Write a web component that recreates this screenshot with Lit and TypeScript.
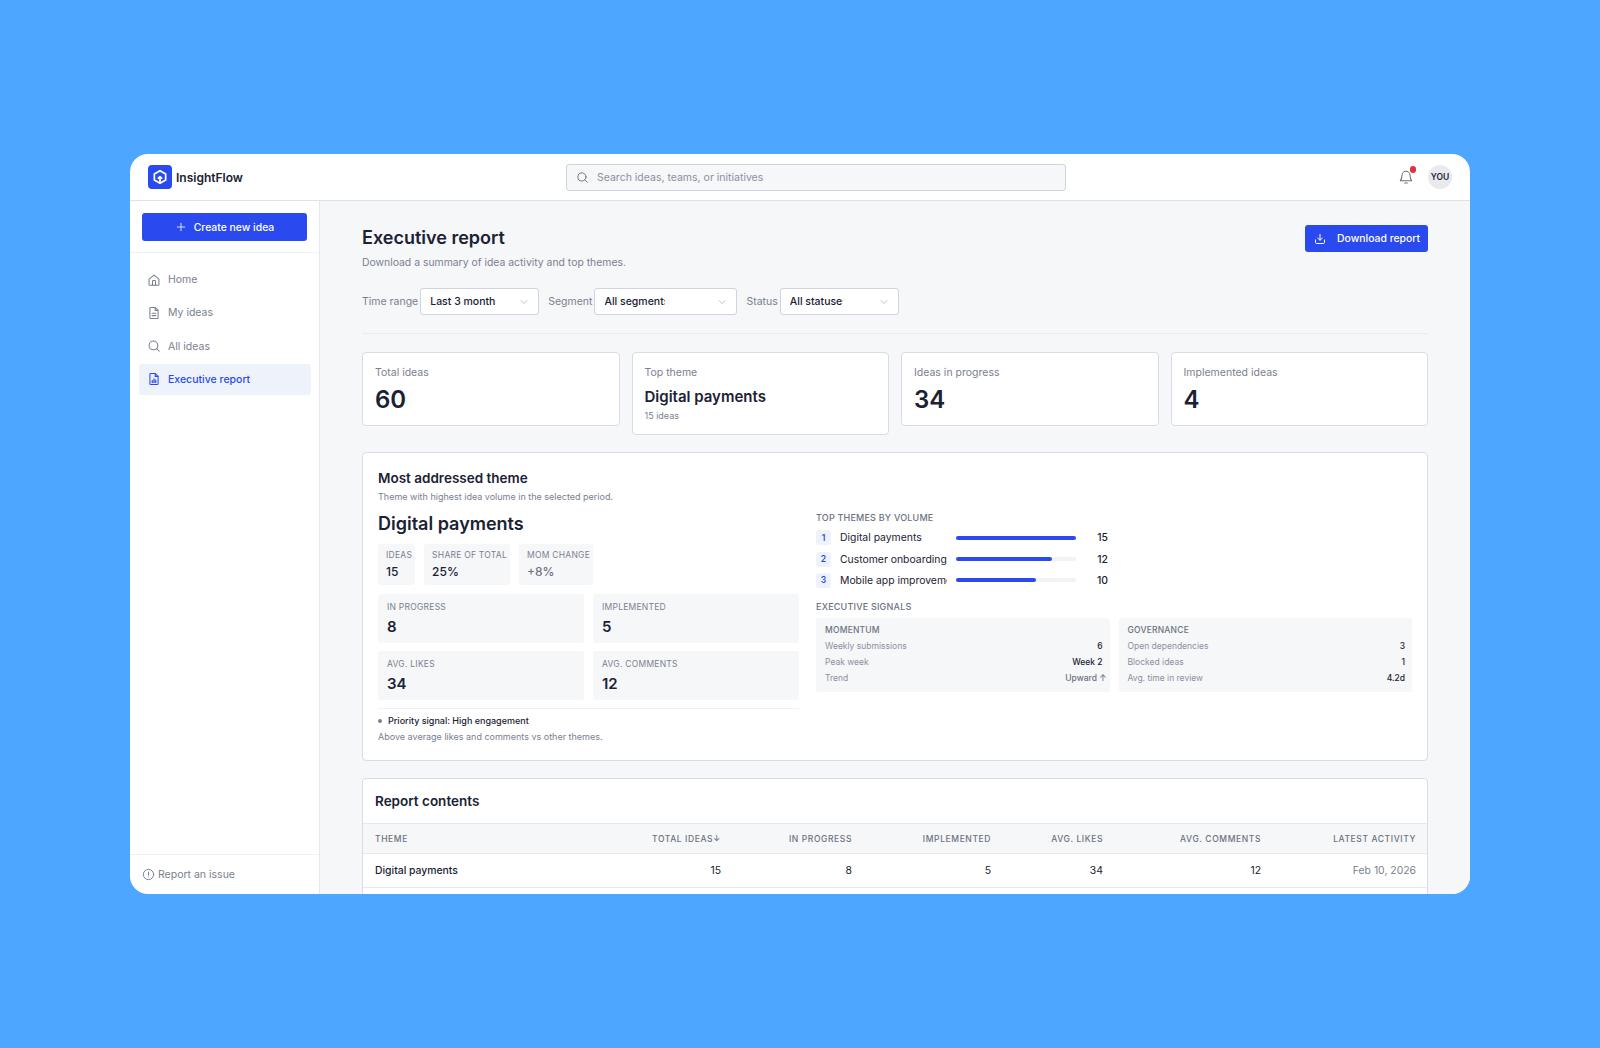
import { LitElement, html, css, svg } from "lit";
import { customElement } from "lit/decorators.js";

const icon = (body: unknown, size = 14, sw = 1.8) => html`<svg
  width=${size}
  height=${size}
  viewBox="0 0 24 24"
  fill="none"
  stroke="currentColor"
  stroke-width=${sw}
  stroke-linecap="round"
  stroke-linejoin="round"
>${body}</svg>`;

const searchPath = svg`<circle cx="11" cy="11" r="7.5"/><path d="M21 21l-4.6-4.6"/>`;
const homePath = svg`<path d="M3.5 10.5 12 3.5l8.5 7V20a1 1 0 0 1-1 1h-15a1 1 0 0 1-1-1z"/><path d="M9.5 21v-7a1 1 0 0 1 1-1h3a1 1 0 0 1 1 1v7"/>`;
const docPath = svg`<path d="M14 2.5H6.5A1.5 1.5 0 0 0 5 4v16a1.5 1.5 0 0 0 1.5 1.5h11A1.5 1.5 0 0 0 19 20V7.5z"/><path d="M14 2.5v5h5"/><path d="M9 12.5h6M9 16.5h6"/>`;
const reportPath = svg`<path d="M14 2.5H6.5A1.5 1.5 0 0 0 5 4v16a1.5 1.5 0 0 0 1.5 1.5h11A1.5 1.5 0 0 0 19 20V7.5z"/><path d="M14 2.5v5h5"/><path d="M9 18v-3M12 18v-6M15 18v-4" stroke-width="2.2"/>`;
const bellPath = svg`<path d="M6 9.5a6 6 0 0 1 12 0c0 5 1.5 7 2.5 8h-17c1-1 2.5-3 2.5-8z"/><path d="M10 21h4"/>`;
const chevron = svg`<path d="M6 9l6 6 6-6"/>`;
const plusPath = svg`<path d="M12 4.5v15M4.5 12h15"/>`;
const downloadPath = svg`<path d="M12 3v11M7.5 10l4.5 4.5 4.5-4.5"/><path d="M3 14v4.5A2.5 2.5 0 0 0 5.5 21h13a2.5 2.5 0 0 0 2.5-2.5V14"/>`;
const alertPath = svg`<circle cx="12" cy="12" r="9.5"/><path d="M12 7.5V13M12 16.5v.2"/>`;

const navItems = [
  { label: "Home", path: homePath },
  { label: "My ideas", path: docPath },
  { label: "All ideas", path: searchPath },
  { label: "Executive report", path: reportPath, active: true },
];

const themes = [
  { rank: 1, name: "Digital payments", pct: 100, count: 15 },
  { rank: 2, name: "Customer onboarding", pct: 80, count: 12 },
  { rank: 3, name: "Mobile app improvements", pct: 67, count: 10 },
];

const tableRows = [
  ["Digital payments", "15", "8", "5", "34", "12", "Feb 10, 2026"],
  ["Customer onboarding", "12", "6", "3", "28", "9", "Feb 8, 2026"],
];

@customElement("app-root")
export class AppRoot extends LitElement {
  static styles = css`
    :host {
      display: flex;
      align-items: center;
      justify-content: center;
      height: 100vh;
      background: #4da6ff;
      font-family: Inter, "Noto Sans", sans-serif;
      color: #1a2233;
    }
    .window {
      width: 1340px;
      height: 740px;
      background: #fff;
      border-radius: 18px;
      overflow: hidden;
      display: flex;
      flex-direction: column;
    }
    .topbar {
      flex: none;
      height: 47px;
      box-sizing: border-box;
      border-bottom: 1.5px solid #dfe2ea;
      display: grid;
      grid-template-columns: 418px 500px 1fr;
      align-items: center;
      padding: 0 18px;
    }
    .brand {
      display: flex;
      align-items: center;
      gap: 4px;
      font-size: 12px;
      font-weight: 600;
    }
    .logo {
      width: 24px;
      height: 24px;
      border-radius: 4px;
      background: #2a4af0;
      display: flex;
      align-items: center;
      justify-content: center;
    }
    .search {
      height: 27px;
      box-sizing: border-box;
      border: 1px solid #cfd3de;
      border-radius: 3px;
      background: #f6f7f9;
      display: flex;
      align-items: center;
      gap: 8px;
      padding: 0 9px;
      font-size: 10.5px;
      color: #8a90a0;
    }
    .search svg {
      color: #5f6675;
    }
    .top-actions {
      display: flex;
      justify-content: flex-end;
      align-items: center;
      gap: 14px;
    }
    .bell {
      position: relative;
      display: flex;
      color: #6b7280;
    }
    .bell i {
      position: absolute;
      top: -3px;
      right: -2px;
      width: 6.5px;
      height: 6.5px;
      border-radius: 50%;
      background: #e5303a;
    }
    .avatar {
      width: 24px;
      height: 24px;
      border-radius: 50%;
      background: #e9eaee;
      font-size: 8.5px;
      font-weight: 600;
      display: flex;
      align-items: center;
      justify-content: center;
    }
    .body {
      flex: 1;
      min-height: 0;
      display: flex;
    }
    .sidebar {
      flex: none;
      width: 190px;
      box-sizing: border-box;
      border-right: 1px solid #e6e8ee;
      display: flex;
      flex-direction: column;
    }
    .create-wrap {
      padding: 12px 12px 11px;
      border-bottom: 1.5px solid #eff1f5;
    }
    .primary {
      display: flex;
      align-items: center;
      background: #2a4af0;
      color: #fff;
      border-radius: 3px;
      font-size: 10.4px;
      font-weight: 500;
    }
    .create {
      height: 28px;
      justify-content: center;
      gap: 7px;
    }
    nav {
      flex: 1;
      padding: 0 8px 0 9px;
      display: flex;
      flex-direction: column;
      gap: 2.3px;
      margin-top: 11px;
    }
    .nav-item {
      height: 31px;
      display: flex;
      align-items: center;
      gap: 7px;
      padding: 0 8px;
      border-radius: 3px;
      font-size: 10.5px;
      color: #7a8090;
    }
    .nav-item.active {
      background: #eef3fb;
      color: #2a4af0;
      font-weight: 500;
    }
    .report-issue {
      height: 40px;
      flex: none;
      box-sizing: border-box;
      padding: 0 12px 1px;
      border-top: 1.5px solid #eff1f5;
      display: flex;
      align-items: center;
      gap: 3px;
      font-size: 10.5px;
      color: #7a8090;
    }
    main {
      flex: 1;
      min-width: 0;
      background: #f6f7f9;
      padding: 24px 42px 0;
      overflow: hidden;
    }
    .head {
      display: flex;
      justify-content: space-between;
      align-items: flex-start;
    }
    h1 {
      margin: 0;
      font-size: 18px;
      line-height: 26px;
      font-weight: 600;
    }
    .lead {
      margin: 5px 0 0;
      font-size: 10.4px;
      line-height: 14px;
      color: #7a8090;
    }
    .download {
      height: 27px;
      padding: 0 8px 0 9px;
      gap: 11px;
    }
    .filters {
      display: flex;
      align-items: center;
      margin-top: 18px;
      padding-bottom: 18px;
      border-bottom: 1px solid #e9ebf0;
      font-size: 10.5px;
      color: #7a8090;
    }
    .filter {
      display: flex;
      align-items: center;
      gap: 2px;
      margin-right: 9px;
    }
    .select {
      height: 27px;
      box-sizing: border-box;
      background: #fff;
      border: 1px solid #cfd3de;
      border-radius: 3px;
      display: flex;
      align-items: center;
      justify-content: space-between;
      padding: 0 8px 0 9px;
      color: #1a2233;
      font-weight: 500;
    }
    .select span {
      overflow: hidden;
      white-space: nowrap;
    }
    .select svg {
      color: #9aa0ae;
      flex: none;
    }
    .w-range {
      width: 119px;
    }
    .w-range span {
      width: 66px;
    }
    .w-seg {
      width: 143px;
    }
    .w-seg span {
      width: 61px;
    }
    .w-status {
      width: 119px;
    }
    .w-status span {
      width: 53px;
    }
    .kpis {
      display: grid;
      grid-template-columns: repeat(4, 1fr);
      gap: 12px;
      align-items: start;
      margin-top: 18px;
    }
    .card {
      background: #fff;
      border: 1px solid #d9dce6;
      border-radius: 4px;
      box-sizing: border-box;
    }
    .kpi {
      padding: 12.5px 12px 0;
      height: 74px;
    }
    .kpi.tall {
      height: 83px;
    }
    .kpi-label {
      font-size: 10.5px;
      line-height: 14px;
      color: #7a8090;
    }
    .kpi-value {
      font-size: 24px;
      line-height: 30px;
      font-weight: 600;
      margin-top: 5px;
    }
    .kpi-theme {
      font-size: 15px;
      line-height: 20px;
      font-weight: 600;
      margin-top: 7.5px;
    }
    .kpi-sub {
      font-size: 9px;
      line-height: 12px;
      color: #7a8090;
      margin-top: 3px;
    }
    .theme-card {
      margin-top: 17px;
      height: 309px;
      padding: 15px;
    }
    h2 {
      margin: 0;
      font-size: 13.5px;
      line-height: 20px;
      font-weight: 600;
    }
    .theme-sub {
      font-size: 9px;
      line-height: 12px;
      color: #7a8090;
      margin-top: 3px;
    }
    .theme-grid {
      display: grid;
      grid-template-columns: 421px 1fr;
      gap: 17px;
    }
    .theme-name {
      font-size: 18px;
      line-height: 26px;
      font-weight: 600;
      margin-top: 8px;
    }
    .minis {
      display: flex;
      gap: 9px;
      margin-top: 7px;
    }
    .mini,
    .stat,
    .panel {
      background: #f6f7f9;
      border-radius: 3px;
    }
    .mini {
      padding: 5px 3px 0 8px;
      height: 41px;
      box-sizing: border-box;
    }
    .caps {
      font-size: 8.5px;
      line-height: 12px;
      letter-spacing: 0.25px;
      color: #7a8090;
    }
    .mini b {
      display: block;
      font-size: 12px;
      line-height: 16px;
      font-weight: 500;
      margin-top: 3px;
    }
    .mini b.muted {
      color: #6b7280;
    }
    .stats {
      display: grid;
      grid-template-columns: 1fr 1fr;
      gap: 8px 9px;
      margin-top: 9px;
    }
    .stat {
      height: 49px;
      box-sizing: border-box;
      padding: 6.5px 9px 0;
    }
    .stat b {
      display: block;
      font-size: 15px;
      line-height: 20px;
      font-weight: 600;
      margin-top: 4px;
    }
    .priority {
      margin-top: 8px;
      border-top: 1.5px solid #eff1f5;
      padding-top: 5px;
      font-size: 9px;
      line-height: 14px;
      font-weight: 500;
      display: flex;
      align-items: center;
      gap: 6px;
    }
    .priority i {
      width: 4px;
      height: 4px;
      border-radius: 50%;
      background: #7a8090;
    }
    .priority-sub {
      font-size: 9px;
      line-height: 12px;
      color: #7a8090;
      margin-top: 3px;
    }
    .right {
      margin-top: 9px;
    }
    .section-title {
      font-size: 9px;
      line-height: 12px;
      font-weight: 500;
      letter-spacing: 0.2px;
      color: #6b7280;
    }
    .rank-row {
      display: flex;
      align-items: center;
      height: 15px;
      margin-top: 6.3px;
      font-size: 10.4px;
    }
    .rank-row:first-of-type {
      margin-top: 1px;
    }
    .rank {
      width: 15px;
      height: 15px;
      border-radius: 3px;
      background: #eef3fb;
      color: #2a4af0;
      font-size: 8.5px;
      font-weight: 600;
      display: flex;
      align-items: center;
      justify-content: center;
      margin-right: 9px;
    }
    .rank-name {
      width: 107px;
      margin-right: 9px;
      overflow: hidden;
      white-space: nowrap;
    }
    .track {
      width: 120px;
      height: 4px;
      border-radius: 2px;
      background: #f1f2f5;
    }
    .fill {
      height: 100%;
      border-radius: 2px;
      background: #2a4af0;
    }
    .rank-count {
      width: 32px;
      text-align: right;
      font-weight: 500;
    }
    .signals-title {
      margin-top: 13px;
    }
    .panels {
      display: grid;
      grid-template-columns: 1fr 1fr;
      gap: 9px;
      margin-top: 5.5px;
    }
    .panel {
      height: 74px;
      box-sizing: border-box;
      padding: 7px 7px 0 9px;
    }
    .panel-title {
      font-size: 8.5px;
      line-height: 11px;
      font-weight: 500;
      letter-spacing: 0.2px;
      color: #6b7280;
      margin-bottom: 2px;
    }
    .signal {
      display: flex;
      justify-content: space-between;
      height: 16px;
      align-items: center;
      font-size: 8.5px;
      color: #8a90a0;
    }
    .signal b {
      font-weight: 500;
      color: #1a2233;
    }
    .signal b.trend {
      color: #6b7280;
      margin-right: -4px;
    }
    .table-card {
      margin-top: 17px;
    }
    .table-card h2 {
      padding: 13px 12px 12px;
      line-height: 19px;
    }
    table {
      width: 1064px;
      border-collapse: collapse;
      table-layout: fixed;
    }
    .c-theme {
      width: 212px;
    }
    .c-wide {
      width: 158px;
    }
    .c-progress {
      width: 131px;
    }
    .c-impl {
      width: 139px;
    }
    .c-likes {
      width: 112px;
    }
    .c-comments {
      width: 158px;
    }
    .c-latest {
      width: 154px;
    }
    th {
      height: 30px;
      padding: 1px 12px 0;
      background: #f6f7f9;
      border-top: 1px solid #e6e8ee;
      border-bottom: 1px solid #e6e8ee;
      font-size: 8.5px;
      font-weight: 500;
      letter-spacing: 0.6px;
      color: #6b7280;
      text-align: right;
      box-sizing: border-box;
    }
    td {
      height: 34px;
      padding: 0 12px;
      border-bottom: 1px solid #e6e8ee;
      font-size: 10.4px;
      text-align: right;
      box-sizing: border-box;
    }
    th:first-child,
    td:first-child {
      text-align: left;
    }
    td:first-child {
      font-weight: 500;
    }
    td:last-child {
      color: #7a8090;
    }
    th:last-child,
    td:last-child {
      padding-right: 11px;
    }
  `;

  render() {
    return html`
      <div class="window">
        <header class="topbar">
          <div class="brand">
            <div class="logo">
              <svg width="16" height="16" viewBox="0 0 24 24" fill="none" stroke="#fff" stroke-width="2.6" stroke-linejoin="round">
                <path d="M12 2.5 20.5 7.5v9L12 21.5 3.5 16.5v-9z"/>
                <path d="M12 21v-9M8.8 14.5 12 11.5l3.2 3"/>
              </svg>
            </div>
            InsightFlow
          </div>
          <div class="search">${icon(searchPath, 13, 1.6)}Search ideas, teams, or initiatives</div>
          <div class="top-actions">
            <div class="bell">${icon(bellPath, 16, 1.6)}<i></i></div>
            <div class="avatar">YOU</div>
          </div>
        </header>
        <div class="body">
          <aside class="sidebar">
            <div class="create-wrap">
              <div class="primary create">${icon(plusPath, 12, 1.6)}Create new idea</div>
            </div>
            <nav>
              ${navItems.map(
                (n) => html`<div class="nav-item ${n.active ? "active" : ""}">${icon(n.path, 14)}${n.label}</div>`
              )}
            </nav>
            <div class="report-issue">${icon(alertPath, 13)}Report an issue</div>
          </aside>
          <main>
            <div class="head">
              <div>
                <h1>Executive report</h1>
                <p class="lead">Download a summary of idea activity and top themes.</p>
              </div>
              <div class="primary download">${icon(downloadPath, 12, 2)}Download report</div>
            </div>
            <div class="filters">
              ${this.renderFilter("Time range", "Last 3 months", "w-range")}
              ${this.renderFilter("Segment", "All segments", "w-seg")}
              ${this.renderFilter("Status", "All statuses", "w-status")}
            </div>
            <section class="kpis">
              <div class="card kpi">
                <div class="kpi-label">Total ideas</div>
                <div class="kpi-value">60</div>
              </div>
              <div class="card kpi tall">
                <div class="kpi-label">Top theme</div>
                <div class="kpi-theme">Digital payments</div>
                <div class="kpi-sub">15 ideas</div>
              </div>
              <div class="card kpi">
                <div class="kpi-label">Ideas in progress</div>
                <div class="kpi-value">34</div>
              </div>
              <div class="card kpi">
                <div class="kpi-label">Implemented ideas</div>
                <div class="kpi-value">4</div>
              </div>
            </section>
            <section class="card theme-card">
              <h2>Most addressed theme</h2>
              <div class="theme-sub">Theme with highest idea volume in the selected period.</div>
              <div class="theme-grid">
                <div>
                  <div class="theme-name">Digital payments</div>
                  <div class="minis">
                    <div class="mini"><div class="caps">IDEAS</div><b>15</b></div>
                    <div class="mini"><div class="caps">SHARE OF TOTAL</div><b>25%</b></div>
                    <div class="mini"><div class="caps">MOM CHANGE</div><b class="muted">+8%</b></div>
                  </div>
                  <div class="stats">
                    <div class="stat"><div class="caps">IN PROGRESS</div><b>8</b></div>
                    <div class="stat"><div class="caps">IMPLEMENTED</div><b>5</b></div>
                    <div class="stat"><div class="caps">AVG. LIKES</div><b>34</b></div>
                    <div class="stat"><div class="caps">AVG. COMMENTS</div><b>12</b></div>
                  </div>
                  <div class="priority"><i></i>Priority signal: High engagement</div>
                  <div class="priority-sub">Above average likes and comments vs other themes.</div>
                </div>
                <div class="right">
                  <div class="section-title">TOP THEMES BY VOLUME</div>
                  ${themes.map(
                    (t) => html`<div class="rank-row">
                      <div class="rank">${t.rank}</div>
                      <div class="rank-name">${t.name}</div>
                      <div class="track"><div class="fill" style="width:${t.pct}%"></div></div>
                      <div class="rank-count">${t.count}</div>
                    </div>`
                  )}
                  <div class="section-title signals-title">EXECUTIVE SIGNALS</div>
                  <div class="panels">
                    <div class="panel">
                      <div class="panel-title">MOMENTUM</div>
                      <div class="signal">Weekly submissions<b>6</b></div>
                      <div class="signal">Peak week<b>Week 2</b></div>
                      <div class="signal">Trend<b class="trend">Upward ↑</b></div>
                    </div>
                    <div class="panel">
                      <div class="panel-title">GOVERNANCE</div>
                      <div class="signal">Open dependencies<b>3</b></div>
                      <div class="signal">Blocked ideas<b>1</b></div>
                      <div class="signal">Avg. time in review<b>4.2d</b></div>
                    </div>
                  </div>
                </div>
              </div>
            </section>
            <section class="card table-card">
              <h2>Report contents</h2>
              <table>
                <colgroup>
                  <col class="c-theme" />
                  <col class="c-wide" />
                  <col class="c-progress" />
                  <col class="c-impl" />
                  <col class="c-likes" />
                  <col class="c-comments" />
                  <col class="c-latest" />
                </colgroup>
                <thead>
                  <tr>
                    <th>THEME</th>
                    <th>TOTAL IDEAS↓</th>
                    <th>IN PROGRESS</th>
                    <th>IMPLEMENTED</th>
                    <th>AVG. LIKES</th>
                    <th>AVG. COMMENTS</th>
                    <th>LATEST ACTIVITY</th>
                  </tr>
                </thead>
                <tbody>
                  ${tableRows.map((r) => html`<tr>${r.map((c) => html`<td>${c}</td>`)}</tr>`)}
                </tbody>
              </table>
            </section>
          </main>
        </div>
      </div>
    `;
  }

  renderFilter(label: string, value: string, cls: string) {
    return html`<div class="filter">
      ${label}
      <div class="select ${cls}"><span>${value}</span>${icon(chevron, 12, 1.3)}</div>
    </div>`;
  }
}
